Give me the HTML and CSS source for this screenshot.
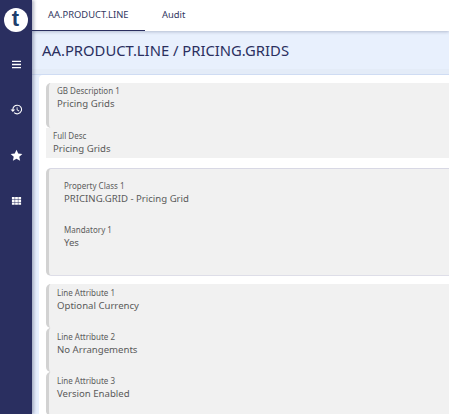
FILE: index.html
```html
<!DOCTYPE html>
<html lang="en">
<head>
<meta charset="utf-8">
<title>AA.PRODUCT.LINE</title>
<link rel="stylesheet" href="styles.css">
</head>
<body>
<div class="app">
  <nav class="rail">
    <div class="logo"><span>t</span></div>
    <button class="rail-btn first" aria-label="Menu">
      <svg viewBox="0 0 12 10" width="11" height="9"><path d="M1 1.5h10M1 5h10M1 8.5h10" stroke="#fff" stroke-width="1.6"/></svg>
    </button>
    <button class="rail-btn" aria-label="History">
      <svg viewBox="0 0 24 24" width="13" height="13"><path fill="#fff" d="M13.3 3A9 9 0 0 0 4.3 12H1l4.3 4.4L9.7 12H6.3a7 7 0 1 1 2.1 5l-1.5 1.4A9 9 0 1 0 13.3 3zm-1 5v5l4.2 2.5.8-1.3-3.5-2.1V8z"/></svg>
    </button>
    <button class="rail-btn" aria-label="Favourites">
      <svg viewBox="0 0 24 24" width="13" height="13"><path fill="#fff" d="M12 1.5l3.2 7 7.6.8-5.7 5.1 1.6 7.5L12 18.1l-6.7 3.8 1.6-7.5L1.200 9.300l7.600-.8z"/></svg>
    </button>
    <button class="rail-btn" aria-label="Apps">
      <svg viewBox="0 0 12 10" width="11" height="10"><path fill="#fff" d="M1 .5h3v2.500H1zM4.500.5h3v2.500h-3zM8 .5h3v2.500H8zM1 3.500h3V6H1zM4.500 3.500h3V6h-3zM8 3.500h3V6H8zM1 6.500h3V9H1zM4.500 6.500h3V9h-3zM8 6.500h3V9H8z"/></svg>
    </button>
  </nav>
  <div class="main">
    <header class="tabs">
      <div class="tab active">AA.PRODUCT.LINE</div>
      <div class="tab">Audit</div>
    </header>
    <div class="title-band"><h1>AA.PRODUCT.LINE / PRICING.GRIDS</h1></div>
    <div class="body">
      <div class="card">
        <section class="group group-one">
          <div class="field marked tall">
            <div class="label">GB Description 1</div>
            <div class="value">Pricing Grids</div>
          </div>
          <div class="field plain">
            <div class="label">Full Desc</div>
            <div class="value">Pricing Grids</div>
          </div>
        </section>
        <section class="group group-two">
          <div class="field inner">
            <div class="label">Property Class 1</div>
            <div class="value">PRICING.GRID - Pricing Grid</div>
          </div>
          <div class="field inner">
            <div class="label">Mandatory 1</div>
            <div class="value">Yes</div>
          </div>
        </section>
        <section class="group-three">
          <div class="field marked attr">
            <div class="label">Line Attribute 1</div>
            <div class="value">Optional Currency</div>
          </div>
          <div class="field marked attr">
            <div class="label">Line Attribute 2</div>
            <div class="value">No Arrangements</div>
          </div>
          <div class="field marked attr">
            <div class="label">Line Attribute 3</div>
            <div class="value">Version Enabled</div>
          </div>
        </section>
      </div>
    </div>
  </div>
</div>
</body>
</html>
```
FILE: styles.css
```css
* { box-sizing: border-box; }
html, body { margin: 0; height: 100%; overflow: hidden; }
body { font-family: "Noto Sans", "Open Sans", sans-serif; color: #4a4a4a; background: #fff; }
.app { display: flex; height: 414px; width: 449px; overflow: hidden; }
.rail { width: 32px; flex: none; background: #2a2f60; display: flex; flex-direction: column; align-items: center; box-shadow: 2px 0 3px rgba(40,45,90,.35); position: relative; z-index: 2; }
.logo { width: 24px; height: 24px; margin-top: 8px; margin-left: -1px; border-radius: 50%; background: #fff; display: flex; align-items: center; justify-content: center; }
.logo span { font: 700 22px/24px "Liberation Sans", sans-serif; color: #1f3f6e; margin-top: -2px; }
.rail-btn { background: none; border: 0; padding: 0; width: 32px; height: 45.300px; display: flex; align-items: center; justify-content: center; }
.rail-btn.first { margin-top: 10px; }
.main { flex: 1; min-width: 0; display: flex; flex-direction: column; }
.tabs { height: 31px; flex: none; display: flex; background: #fff; box-shadow: 0 1px 3px rgba(60,70,110,.3); position: relative; z-index: 1; }
.tab { font-size: 9.400px; line-height: 29px; color: #33385f; padding: 0 16px; height: 31px; }
.tab.active { width: 113px; border-bottom: 1px solid #2a2f60; white-space: nowrap; }
.tab + .tab { padding-left: 17px; }
.title-band { height: 44px; flex: none; background: #e8f0fd; border-bottom: 1px solid #cfdcf3; padding: 0 10px; display: flex; align-items: center; box-shadow: inset 0 -5px 0 #e4ecf8; }
.title-band h1 { margin: 0 0 5px; font-size: 14.800px; font-weight: 400; color: #2a2f60; white-space: nowrap; }
.body { flex: 1; background: #e8f0fd; padding-left: 7px; min-height: 0; }
.card { background: #fff; height: 100%; padding: 8px 0 0 7px; border-radius: 4px 0 0 0; }
.group { background: #f1f1f1; }
.group-one { height: 75px; margin-bottom: 10px; background: linear-gradient(#fff 45px, #f1f1f1 45px); }
.group-two { height: 108px; margin-bottom: 8px; border-top: 1px solid #d8d8e4; border-bottom: 1px solid #dedee8; border-left: 3px solid #d2d2d2; border-radius: 5px 0 0 5px; padding: 11px 0 0 15px; }
.field { padding-left: 8px; }
.label { font-size: 8px; line-height: 12px; color: #5c5c5c; white-space: nowrap; }
.value { font-size: 9.600px; line-height: 14.500px; color: #5a5a5a; white-space: nowrap; }
.marked { background: #f1f1f1; border-left: 3px solid #d2d2d2; border-radius: 5px 0 0 5px; }
.tall { height: 45px; padding-top: 2px; }
.plain { padding: 2px 0 0 7px; }
.inner { padding-left: 0; height: 44px; }
.attr { height: 44px; padding-top: 3px; }
```
